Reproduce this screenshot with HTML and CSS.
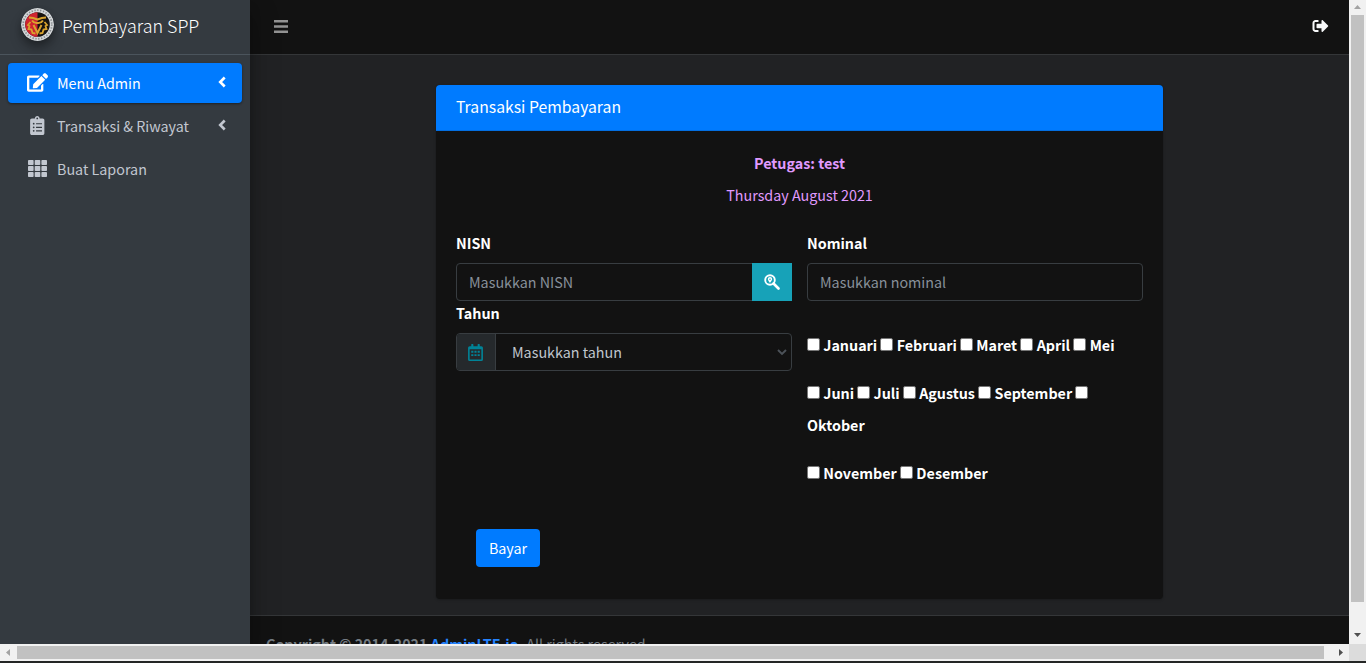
FILE: index.html
```html
<!DOCTYPE html>
<html lang="id">
<head>
<meta charset="utf-8">
<title>Pembayaran SPP</title>
<link rel="stylesheet" href="styles.css">
</head>
<body>
<div class="window">
  <div class="viewport">
    <aside class="sidebar">
      <div class="brand">
        <svg class="logo" viewBox="0 0 33 33"><circle cx="16.500" cy="16.500" r="16.500" fill="#d3d6d8"/><circle cx="16.500" cy="16.500" r="14.300" fill="none" stroke="#85898d" stroke-width="1.700" stroke-dasharray="1.300 1.600"/><circle cx="16.500" cy="16.500" r="12.300" fill="#171310"/><path d="M16.500 4.200a12.300 12.300 0 0 0 0 24.600z" fill="#cf2431"/><g fill="none" stroke="#d9a32e" stroke-width="2"><path d="M8 9.500q4 .2 8.500 2 4.500-1.800 8.500-2M11 12.500q2 3 5.500 2.500 3.500.5 5.500-2.500M12.500 17l4 8 4-8"/><path d="M9.500 14l-2.500 3 1.500 1-1 3 3 .5 1 3.500 3 .5M23.500 14l2.500 3-1.500 1 1 3-3 .5-1 3.500-3 .5" stroke-width="1.800"/></g></svg>
        <span class="brand-text">Pembayaran SPP</span>
      </div>
      <nav class="menu">
        <a class="item active">
          <span class="icon-box"><svg width="21" height="19" viewBox="0 0 576 512"><path d="M402.600 83.200l90.200 90.200c3.800 3.800 3.800 10 0 13.800L274.400 405.600l-92.800 10.300c-12.400 1.400-22.900-9.100-21.500-21.500l10.300-92.800L388.800 83.200c3.800-3.800 10-3.800 13.800 0zm162-22.900l-48.800-48.800c-15.200-15.200-39.900-15.200-55.200 0l-35.400 35.400c-3.800 3.800-3.800 10 0 13.800l90.200 90.200c3.800 3.800 10 3.800 13.800 0l35.400-35.400c15.200-15.300 15.200-40 0-55.200zM384 346.200V448H64V128h229.800c3.200 0 6.200-1.300 8.500-3.500l40-40c7.600-7.600 2.200-20.500-8.500-20.500H48C21.500 64 0 85.500 0 112v352c0 26.500 21.500 48 48 48h352c26.500 0 48-21.500 48-48V306.200c0-10.700-12.900-16-20.500-8.500l-40 40c-2.200 2.300-3.500 5.300-3.500 8.500z"/></svg></span>
          <span class="label">Menu Admin</span>
          <svg class="angle" viewBox="0 0 8 12"><path d="M6.700 1.500L2.200 6l4.500 4.500"/></svg>
        </a>
        <a class="item">
          <span class="icon-box"><svg width="14.500" height="19" viewBox="0 0 384 512"><path fill-rule="evenodd" d="M336 64h-80c0-35-29-64-64-64s-64 29-64 64H48C21.500 64 0 85.500 0 112v352c0 26.500 21.500 48 48 48h288c26.500 0 48-21.500 48-48V112c0-26.500-21.500-48-48-48zM192 40a24 24 0 1 1 0 48 24 24 0 0 1 0-48zM96 184a24 24 0 1 1 0 48 24 24 0 0 1 0-48zm0 96a24 24 0 1 1 0 48 24 24 0 0 1 0-48zm0 96a24 24 0 1 1 0 48 24 24 0 0 1 0-48zM160 192h160v32H160zM160 288h160v32H160zM160 384h160v32H160z"/></svg></span>
          <span class="label">Transaksi &amp; Riwayat</span>
          <svg class="angle" viewBox="0 0 8 12"><path d="M6.700 1.500L2.200 6l4.500 4.500"/></svg>
        </a>
        <a class="item">
          <span class="icon-box"><svg width="19" height="17" viewBox="0 0 19 17"><g><rect width="5.600" height="5" rx=".8"/><rect x="6.700" width="5.600" height="5" rx=".8"/><rect x="13.400" width="5.600" height="5" rx=".8"/><rect y="6" width="5.600" height="5" rx=".8"/><rect x="6.700" y="6" width="5.600" height="5" rx=".8"/><rect x="13.400" y="6" width="5.600" height="5" rx=".8"/><rect y="12" width="5.600" height="5" rx=".8"/><rect x="6.700" y="12" width="5.600" height="5" rx=".8"/><rect x="13.400" y="12" width="5.600" height="5" rx=".8"/></g></svg></span>
          <span class="label">Buat Laporan</span>
        </a>
      </nav>
    </aside>
    <div class="page">
      <header class="topbar">
        <svg class="bars" width="14" height="13" viewBox="0 0 14 13"><path d="M0 0h14v2.500H0zM0 5.200h14v2.500H0zM0 10.400h14v2.500H0z"/></svg>
        <svg class="logout" width="17" height="16" viewBox="0 0 512 512"><path d="M497 273L329 441c-15 15-41 4.500-41-17v-96H152c-13.300 0-24-10.700-24-24v-96c0-13.300 10.700-24 24-24h136V88c0-21.400 25.900-32 41-17l168 168c9.300 9.400 9.300 24.600 0 34zM192 436v-40c0-6.600-5.400-12-12-12H96c-17.700 0-32-14.300-32-32V160c0-17.700 14.300-32 32-32h84c6.600 0 12-5.400 12-12V76c0-6.600-5.400-12-12-12H96c-53 0-96 43-96 96v192c0 53 43 96 96 96h84c6.600 0 12-5.400 12-12z"/></svg>
      </header>
      <main class="content">
        <section class="card">
          <h3 class="card-title">Transaksi Pembayaran</h3>
          <div class="card-body">
            <p class="officer"><b>Petugas: test</b></p>
            <p class="officer">Thursday August 2021</p>
            <div class="columns">
              <div class="column">
                <label class="caption">NISN</label>
                <div class="control">
                  <span class="placeholder">Masukkan NISN</span>
                  <span class="search"><svg width="16" height="16" viewBox="0 0 16 16"><circle cx="6" cy="6" r="4.800" fill="none" stroke="#fff" stroke-width="1.900"/><path d="M9.500 9.500l5 5" stroke="#fff" stroke-width="2.600" stroke-linecap="round"/><path fill="#fff" fill-rule="evenodd" d="M6 2.900a2.200 2.200 0 0 1 2.200 2.200C8.200 6.500 6 9 6 9S3.800 6.500 3.800 5.100A2.200 2.200 0 0 1 6 2.900zm0 1.500a.75.75 0 1 0 0 1.500.75.75 0 0 0 0-1.500z"/></svg></span>
                </div>
                <label class="caption">Tahun</label>
                <div class="control">
                  <span class="addon"><svg width="15" height="17" viewBox="0 0 448 512"><path fill-rule="evenodd" d="M400 64h-48V12a12 12 0 0 0-12-12h-40a12 12 0 0 0-12 12v52H160V12a12 12 0 0 0-12-12h-40a12 12 0 0 0-12 12v52H48a48 48 0 0 0-48 48v352a48 48 0 0 0 48 48h352a48 48 0 0 0 48-48V112a48 48 0 0 0-48-48zM48 160h352v304H48zM96 204h64v56H96zm96 0h64v56h-64zm96 0h64v56h-64zM96 308h64v56H96zm96 0h64v56h-64zm96 0h64v56h-64z"/></svg></span>
                  <span class="selected">Masukkan tahun</span>
                  <svg class="chevron" width="10" height="7" viewBox="0 0 10 7"><path d="M1 1l4 4 4-4"/></svg>
                </div>
              </div>
              <div class="column">
                <label class="caption">Nominal</label>
                <div class="control"><span class="placeholder">Masukkan nominal</span></div>
                <div class="months">
                  <p><input type="checkbox"> Januari <input type="checkbox"> Februari <input type="checkbox"> Maret <input type="checkbox"> April <input type="checkbox"> Mei</p>
                  <p><input type="checkbox"> Juni <input type="checkbox"> Juli <input type="checkbox"> Agustus <input type="checkbox"> September <input type="checkbox"><br>Oktober</p>
                  <p><input type="checkbox"> November <input type="checkbox"> Desember</p>
                </div>
              </div>
            </div>
            <button class="pay">Bayar</button>
          </div>
        </section>
      </main>
      <footer class="footer"><b>Copyright © 2014-2021 <a>AdminLTE.io</a>.</b> All rights reserved.</footer>
    </div>
  </div>
  <div class="vscroll"><svg width="17" height="15" viewBox="0 0 17 15"><path d="M5 9h7L8.500 5z" fill="#a3a3a3"/></svg><div class="vthumb"></div><svg width="17" height="17" viewBox="0 0 17 17"><path d="M5 6h7l-3.500 4z" fill="#505050"/></svg></div>
  <div class="hscroll"><svg width="17" height="17" viewBox="0 0 17 17"><path d="M10 5v7L6 8.500z" fill="#a3a3a3"/></svg><div class="hthumb"></div><svg width="25" height="17" viewBox="0 0 25 17"><path d="M15 5v7l4-3.500z" fill="#505050"/></svg></div>
  <div class="corner"></div>
</div>
</body>
</html>
```
FILE: styles.css
```css
* { box-sizing: border-box; }
body {
  margin: 0;
  background: #242625;
  color: #fff;
  font: 14.32px/24px "Noto Sans CJK SC", "Noto Sans", sans-serif;
  overflow: hidden;
}
p, h3 { margin: 0; }
svg { display: block; flex: none; }
.window {
  display: grid;
  grid-template: 644px 17px / 1349px 17px;
  height: 663px;
}
.viewport { display: flex; overflow: hidden; background: #212224; }
.sidebar {
  width: 250px;
  flex: none;
  background: #343a40;
  box-shadow: 0 14px 28px rgba(0,0,0,.25), 0 10px 10px rgba(0,0,0,.22);
  z-index: 1;
}
.brand {
  display: flex;
  height: 55px;
  padding: 8px 0 0 21px;
  border-bottom: 1px solid #4b545c;
}
.logo {
  width: 33px;
  height: 33px;
  border-radius: 50%;
  box-shadow: 0 8px 12px rgba(0,0,0,.25), 0 3px 6px rgba(0,0,0,.2);
}
.brand-text {
  margin-left: 8px;
  font-size: 17.9px;
  font-weight: 300;
  line-height: 34px;
  white-space: nowrap;
}
.menu { display: flex; flex-direction: column; gap: 3px; padding: 8px; }
.item {
  display: flex;
  align-items: center;
  height: 40px;
  padding: 0 16px 0 16px;
  border-radius: 4px;
  color: #c2c7d0;
  fill: #c2c7d0;
  stroke: none;
}
.item.active {
  background: #007bff;
  color: #fff;
  fill: #fff;
  box-shadow: 0 1px 3px rgba(0,0,0,.2), 0 1px 2px rgba(0,0,0,.24);
}
.icon-box { display: flex; justify-content: center; width: 27px; margin: 0 6px 1px 0; }
.label { flex: 1; }
.angle { width: 8px; height: 12px; margin-bottom: 3px; fill: none; stroke: currentColor; stroke-width: 2.6; }
.page { flex: 1; display: flex; flex-direction: column; }
.topbar {
  display: flex;
  justify-content: space-between;
  align-items: center;
  height: 55px;
  flex: none;
  padding: 0 20px 2px 24px;
  background: #121212;
  border-bottom: 1px solid #343638;
}
.bars { fill: #939393; }
.logout { fill: #f8f9fa; }
.content { height: 560px; flex: none; padding: 30px 186px 0; }
.card {
  width: 727px;
  height: 514px;
  background: #121212;
  border-radius: 4px;
  box-shadow: 0 0 1px rgba(0,0,0,.13), 0 1px 3px rgba(0,0,0,.2);
}
.card-title {
  height: 46px;
  padding: 10px 20px 0;
  background: #007bff;
  border-bottom: 1px solid #036ee0;
  border-radius: 4px 4px 0 0;
  font-size: 15.76px;
  font-weight: 400;
}
.card-body { padding: 20px; }
.officer { margin-bottom: 8px; text-align: center; color: #e09aff; }
.columns { display: flex; gap: 15px; padding-top: 16px; height: 314px; }
.column { width: 336px; }
.caption { display: block; margin-bottom: 8px; font-weight: 700; }
.control {
  display: flex;
  align-items: center;
  height: 38px;
  border: 1px solid #383d41;
  border-radius: 4px;
}
.placeholder { flex: 1; padding-left: 12px; color: #88909a; }
.search {
  display: flex;
  align-items: center;
  justify-content: center;
  width: 40px;
  height: 38px;
  margin-right: -1px;
  background: #17a2b8;
}
.addon {
  display: flex;
  align-items: center;
  justify-content: center;
  width: 39px;
  height: 36px;
  padding-right: 1px;
  background: #25292c;
  border-right: 1px solid #383d41;
  border-radius: 3px 0 0 3px;
  fill: #008397;
}
.selected { flex: 1; padding-left: 16px; color: #c0c6ce; }
.chevron { margin-right: 4px; fill: none; stroke: #4c5259; stroke-width: 1.9; }
.months { padding-top: 28px; font-weight: 700; line-height: 32px; white-space: nowrap; }
.months p { margin-bottom: 16px; }
.months input {
  appearance: none;
  width: 13px;
  height: 13px;
  margin: 0;
  background: #fff;
  border: 1px solid #767676;
  border-radius: 2px;
  vertical-align: 0;
}
.pay {
  display: block;
  width: 64px;
  height: 38px;
  margin: 0 0 0 20px;
  padding: 0;
  border: 0;
  border-radius: 4px;
  background: #007bff;
  color: #fff;
  font: inherit;
}
.footer {
  height: 57px;
  flex: none;
  padding: 16px;
  background: #121212;
  border-top: 1px solid #343638;
  color: #747b82;
}
.footer a { color: #2584ff; }
.vscroll { background: #f1f1f1; }
.vthumb { height: 587px; margin: 0 2px 0; background: #c1c1c1; }
.vscroll svg:last-child { margin-top: 25px; }
.hscroll { display: flex; align-items: center; background: #f1f1f1; }
.hthumb { width: 1307px; height: 13px; background: #c1c1c1; }
.corner { background: #dcdcdc; }
```
